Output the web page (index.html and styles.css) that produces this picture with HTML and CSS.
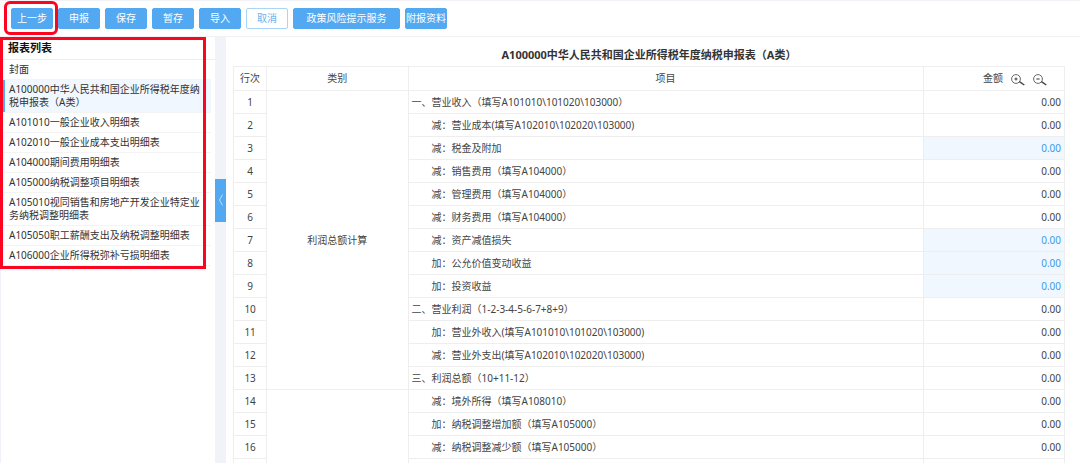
FILE: index.html
```html
<!DOCTYPE html>
<html lang="zh-CN">
<head>
<meta charset="utf-8">
<title>企业所得税年度纳税申报表</title>
<link rel="stylesheet" href="styles.css">
</head>
<body>
<header class="toolbar">
  <div class="step-back">
    <button class="btn" type="button">上一步</button>
    <span class="mark mark-round"></span>
  </div>
  <button class="btn" type="button">申报</button>
  <button class="btn" type="button">保存</button>
  <button class="btn" type="button">暂存</button>
  <button class="btn" type="button">导入</button>
  <button class="btn btn-plain" type="button">取消</button>
  <button class="btn btn-wide" type="button">政策风险提示服务</button>
  <button class="btn" type="button">附报资料</button>
</header>
<div class="workspace">
  <nav class="sidebar">
    <div class="report-list">
      <h2 class="list-title">报表列表</h2>
      <ul class="reports">
        <li><a class="report" href="#">封面</a></li>
        <li><a class="report report-active" href="#" aria-current="page">A100000中华人民共和国企业所得税年度纳税申报表（A类）</a></li>
        <li><a class="report" href="#">A101010一般企业收入明细表</a></li>
        <li><a class="report" href="#">A102010一般企业成本支出明细表</a></li>
        <li><a class="report" href="#">A104000期间费用明细表</a></li>
        <li><a class="report" href="#">A105000纳税调整项目明细表</a></li>
        <li><a class="report" href="#">A105010视同销售和房地产开发企业特定业务纳税调整明细表</a></li>
        <li><a class="report" href="#">A105050职工薪酬支出及纳税调整明细表</a></li>
        <li><a class="report" href="#">A106000企业所得税弥补亏损明细表</a></li>
      </ul>
      <span class="mark mark-square"></span>
    </div>
  </nav>
  <div class="splitter">
    <button class="collapse" type="button" aria-label="收起列表">
      <svg width="6" height="14" viewBox="0 0 6 14"><path d="M4.5 1.5 1.5 7l3 5.5" fill="none" stroke="#b5dcfb" stroke-width="1"/></svg>
    </button>
  </div>
  <main class="content">
    <h1 class="form-title">A100000中华人民共和国企业所得税年度纳税申报表（A类）</h1>
    <table class="form">
      <colgroup><col class="col-no"><col class="col-type"><col class="col-item"><col class="col-amount"></colgroup>
      <thead>
        <tr>
          <th>行次</th><th>类别</th><th>项目</th>
          <th>
            <span class="amount-head">金额
              <button class="zoom" type="button" aria-label="放大"><svg width="14" height="12" viewBox="0 0 14 12"><circle cx="5" cy="5" r="4.4" fill="none" stroke="#666" stroke-width="1"/><path d="M3.5 5h3M5 3.5v3" stroke="#444" stroke-width="1.1"/><path d="M8.4 7.6 13.3 11" stroke="#444" stroke-width="1.5"/></svg></button>
              <button class="zoom" type="button" aria-label="缩小"><svg width="14" height="12" viewBox="0 0 14 12"><circle cx="5" cy="5" r="4.4" fill="none" stroke="#666" stroke-width="1"/><path d="M3.4 5h3.2" stroke="#444" stroke-width="1.1"/><path d="M8.4 7.6 13.3 11" stroke="#444" stroke-width="1.5"/></svg></button>
            </span>
          </th>
        </tr>
      </thead>
      <tbody>
        <tr><td class="no">1</td><td class="type" rowspan="13">利润总额计算</td><td class="item">一、营业收入（填写A101010\101020\103000）</td><td class="amount">0.00</td></tr>
        <tr><td class="no">2</td><td class="item sub">减：营业成本(填写A102010\102020\103000)</td><td class="amount">0.00</td></tr>
        <tr><td class="no">3</td><td class="item sub">减：税金及附加</td><td class="amount editable">0.00</td></tr>
        <tr><td class="no">4</td><td class="item sub">减：销售费用（填写A104000）</td><td class="amount">0.00</td></tr>
        <tr><td class="no">5</td><td class="item sub">减：管理费用（填写A104000）</td><td class="amount">0.00</td></tr>
        <tr><td class="no">6</td><td class="item sub">减：财务费用（填写A104000）</td><td class="amount">0.00</td></tr>
        <tr><td class="no">7</td><td class="item sub">减：资产减值损失</td><td class="amount editable">0.00</td></tr>
        <tr><td class="no">8</td><td class="item sub">加：公允价值变动收益</td><td class="amount editable">0.00</td></tr>
        <tr><td class="no">9</td><td class="item sub">加：投资收益</td><td class="amount editable">0.00</td></tr>
        <tr><td class="no">10</td><td class="item">二、营业利润（1-2-3-4-5-6-7+8+9）</td><td class="amount">0.00</td></tr>
        <tr><td class="no">11</td><td class="item sub">加：营业外收入(填写A101010\101020\103000)</td><td class="amount">0.00</td></tr>
        <tr><td class="no">12</td><td class="item sub">减：营业外支出(填写A102010\102020\103000)</td><td class="amount">0.00</td></tr>
        <tr><td class="no">13</td><td class="item">三、利润总额（10+11-12）</td><td class="amount">0.00</td></tr>
        <tr><td class="no">14</td><td class="type" rowspan="4"></td><td class="item sub">减：境外所得（填写A108010）</td><td class="amount">0.00</td></tr>
        <tr><td class="no">15</td><td class="item sub">加：纳税调整增加额（填写A105000）</td><td class="amount">0.00</td></tr>
        <tr><td class="no">16</td><td class="item sub">减：纳税调整减少额（填写A105000）</td><td class="amount">0.00</td></tr>
        <tr><td class="no"></td><td class="item"></td><td class="amount"></td></tr>
      </tbody>
    </table>
  </main>
</div>
</body>
</html>
```
FILE: styles.css
```css
* { box-sizing: border-box; }

body {
  display: flex;
  flex-direction: column;
  height: 100vh;
  margin: 0;
  overflow: hidden;
  background: #fff;
  border-top: 1px solid #f0f2f8;
  color: #444;
  font-family: "Noto Sans", "Noto Sans CJK SC", sans-serif;
  font-size: 10px;
  line-height: 13px;
}

button { font: inherit; }

.toolbar {
  display: flex;
  flex: none;
  gap: 5px;
  padding: 7px 11px;
  border-bottom: 1px solid #f1f1f3;
}

.btn {
  display: block;
  min-width: 42px;
  height: 21px;
  padding: 0;
  border: 1px solid #52a9f2;
  border-radius: 2px;
  background: #52a9f2;
  color: #fff;
}

.btn-plain {
  background: #fff;
  border-color: #a9d5fa;
  color: #6bb2f0;
}

.btn-wide { min-width: 107px; }

.step-back { position: relative; }

.mark {
  position: absolute;
  border: 3px solid #fb0520;
  pointer-events: none;
}

.mark-round {
  inset: -7px -5px -6px -7px;
  border-radius: 6px;
}

.mark-square { inset: 0 9px -3px 0; }

.workspace {
  display: flex;
  flex: 1;
  min-height: 0;
}

.sidebar {
  flex: none;
  width: 215px;
  border-left: 1px solid #f0f2f8;
}

.report-list {
  position: relative;
  margin-left: -1px;
}

.list-title {
  margin: 0;
  padding: 4px 8px;
  border-bottom: 1px solid #eee;
  color: #111;
  font-size: 11px;
  line-height: 14px;
}

.reports {
  margin: 0;
  padding: 0 4px 0 3px;
  list-style: none;
}

.report {
  display: block;
  padding: 3px 9px 3px 4px;
  border-left: 2px solid transparent;
  color: #333;
  text-decoration: none;
  word-break: break-all;
}

.reports li { border-bottom: 1px solid #f4f4f4; }

.report-active {
  border-left-color: #52a9f2;
  background: #f0f7ff;
}

.splitter {
  display: flex;
  flex: none;
  flex-direction: column;
  justify-content: center;
  width: 11px;
  padding-bottom: 100px;
  background: #f1f3f9;
}

.collapse {
  display: flex;
  align-items: center;
  justify-content: center;
  height: 43px;
  padding: 0;
  border: 0;
  background: #52a9f2;
}

.content {
  flex: 1;
  min-width: 0;
  padding: 10px 15px 0 7px;
}

.form-title {
  margin: 0 0 3px;
  color: #333;
  font-size: 11px;
  line-height: 16px;
  text-align: center;
}

.form {
  width: 100%;
  border-collapse: collapse;
  table-layout: fixed;
}

.form th,
.form td {
  height: 23px;
  padding: 0 3px;
  border: 1px solid #eee;
  font-weight: normal;
}

.form th { height: 24px; }

.col-no { width: 4%; }
.col-type { width: 17%; }
.col-amount { width: 17%; }

.no,
.type { text-align: center; }

.form .sub { padding-left: 23px; }

.amount { text-align: right; }

.editable {
  background: #f0f7ff;
  color: #3d9be9;
}

.amount-head {
  display: flex;
  align-items: center;
  justify-content: flex-end;
  gap: 8px;
  padding-right: 14px;
}

.zoom {
  display: flex;
  padding: 3px 0 0;
  border: 0;
  background: none;
}
```
